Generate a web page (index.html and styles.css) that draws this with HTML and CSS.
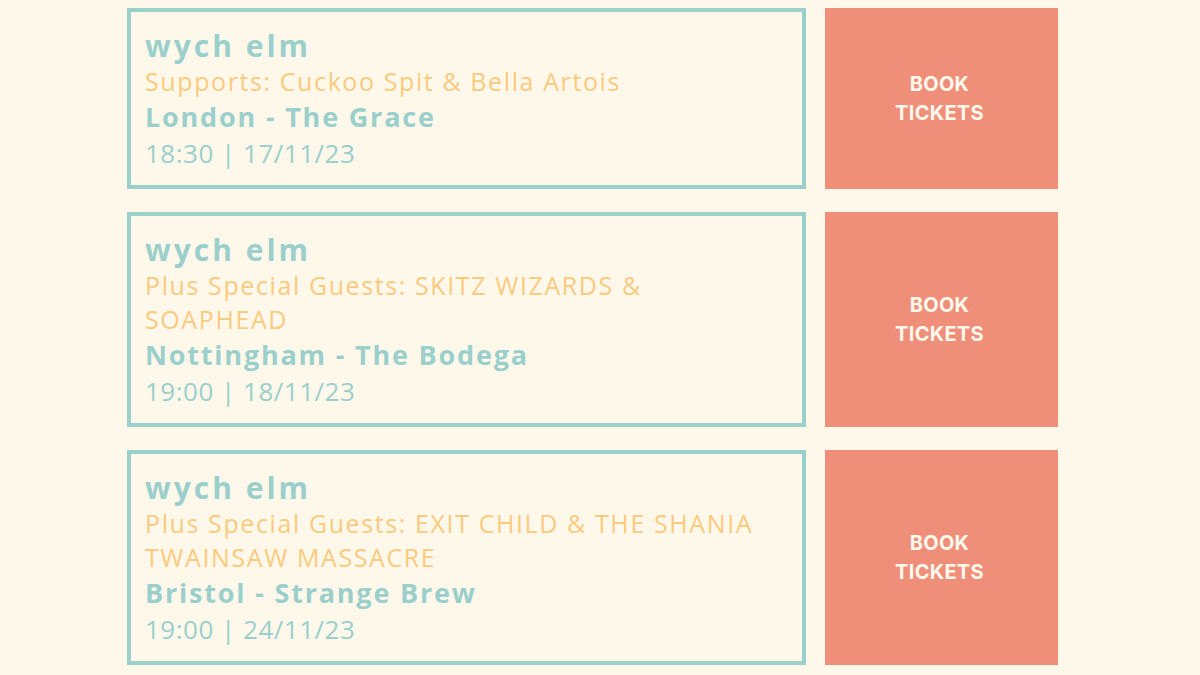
FILE: index.html
```html
<!DOCTYPE html>
<html lang="en">
<head>
  <meta charset="UTF-8">
  <meta name="viewport" content="width=device-width, initial-scale=1.0">
  <title>wych elm - Tour Dates</title>
  <link rel="stylesheet" href="styles.css">
</head>
<body>
  <div class="gigs">
    <div class="gig">
      <div class="gig-info">
        <div class="artist">wych elm</div>
        <div class="support">Supports: Cuckoo Spit &amp; Bella Artois</div>
        <div class="venue">London - The Grace</div>
        <div class="when">18:30 | 17/11/23</div>
      </div>
      <a class="book" href="#">Book<br>Tickets</a>
    </div>

    <div class="gig">
      <div class="gig-info">
        <div class="artist">wych elm</div>
        <div class="support">Plus Special Guests: SKITZ WIZARDS &amp; SOAPHEAD</div>
        <div class="venue">Nottingham - The Bodega</div>
        <div class="when">19:00 | 18/11/23</div>
      </div>
      <a class="book" href="#">Book<br>Tickets</a>
    </div>

    <div class="gig">
      <div class="gig-info">
        <div class="artist">wych elm</div>
        <div class="support">Plus Special Guests: EXIT CHILD &amp; THE SHANIA TWAINSAW MASSACRE</div>
        <div class="venue">Bristol - Strange Brew</div>
        <div class="when">19:00 | 24/11/23</div>
      </div>
      <a class="book" href="#">Book<br>Tickets</a>
    </div>
  </div>
</body>
</html>
```

FILE: styles.css
```css
body {
  margin: 0;
  padding: 8px 0 0 127px;
  background-color: #fef8eb;
  font-family: 'Open Sans', sans-serif;
  overflow: hidden;
}

.gigs {
  display: flex;
  flex-direction: column;
  gap: 23px;
  width: 931px;
}

.gig {
  display: grid;
  grid-template-columns: 679px 233px;
  gap: 19px;
}

.gig-info {
  border: 4px solid #9bcfcb;
  padding: 15px 30px 14px 14px;
  font-size: 26px;
  line-height: 36px;
  color: #9bcfcb;
}

.artist {
  font-weight: 700;
  font-size: 30px;
  line-height: 37px;
  letter-spacing: 3px;
}

.support {
  color: #fcca7d;
  font-size: 25px;
  line-height: 34px;
  letter-spacing: 1.6px;
}

.venue {
  font-weight: 700;
  font-size: 27px;
  line-height: 38px;
  letter-spacing: 1.8px;
}

.when {
  line-height: 35px;
  letter-spacing: 0.5px;
}

.book {
  display: flex;
  align-items: center;
  justify-content: center;
  text-align: center;
  padding-right: 4px;
  background-color: #ef8f7a;
  color: #fff8ec;
  text-decoration: none;
  text-transform: uppercase;
  font-family: 'Inter', sans-serif;
  font-weight: 700;
  font-size: 20px;
  line-height: 29px;
  letter-spacing: 0.3px;
}
```
